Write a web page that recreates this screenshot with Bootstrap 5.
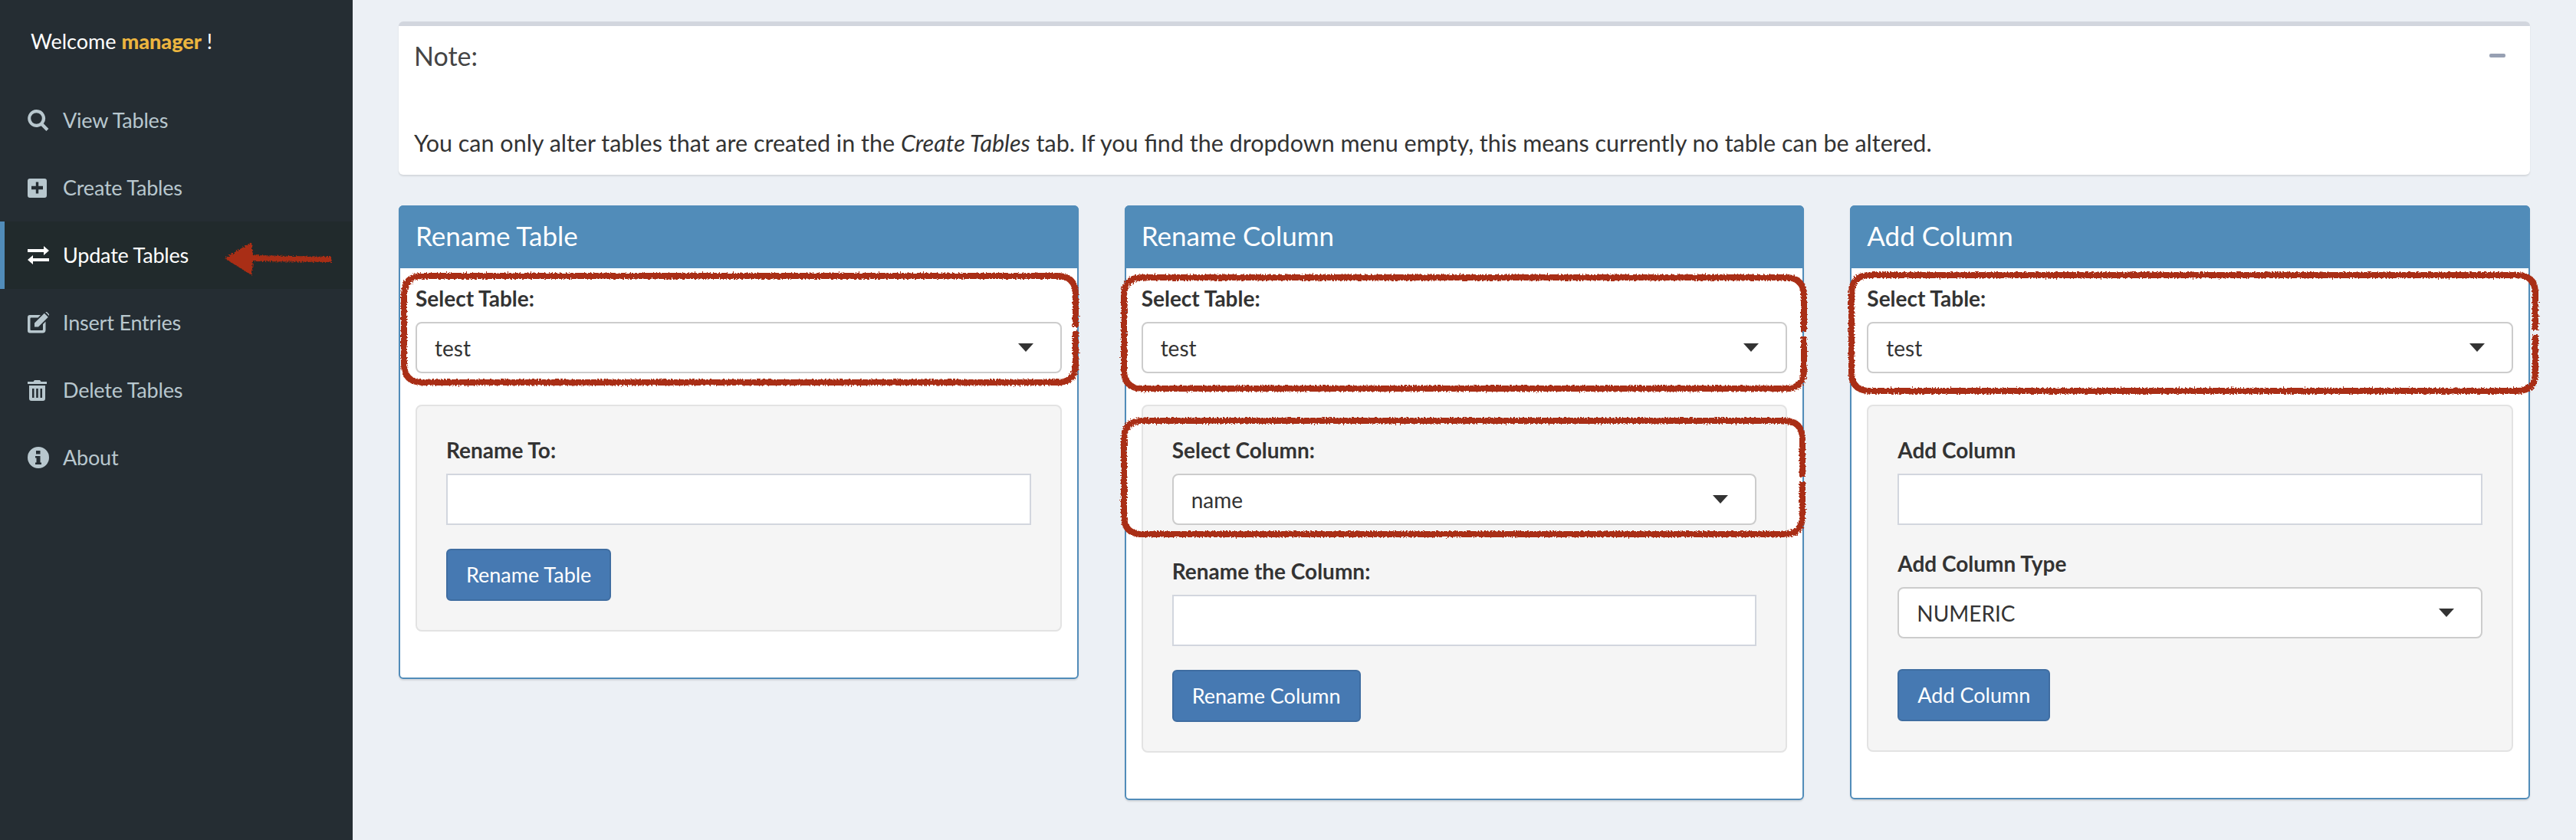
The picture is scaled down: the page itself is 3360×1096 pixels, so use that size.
<!DOCTYPE html>
<html lang="en">

<head>
  <meta charset="UTF-8" />
  <title>Update Tables</title>
  <link href="https://cdn.jsdelivr.net/npm/bootstrap@5.3.3/dist/css/bootstrap.min.css" rel="stylesheet">
  <style>
    body {
      background-color: #ecf0f5;
      color: #333;
      font-family: Lato, "Noto Sans", sans-serif;
      font-size: 28px;
      height: 1096px;
      overflow: hidden;
    }

    .side-panel {
      width: 460px;
      height: 1096px;
      flex: none;
      background-color: #252d33;
    }

    .welcome-line {
      color: #fff;
      padding: 40px 0 0 40px;
      height: 113px;
      line-height: 28px;
      font-size: 27px;
    }

    .welcome-line b {
      color: #edb53f;
      font-weight: 900;
    }

    .side-link {
      height: 88px;
      padding-left: 36px;
      color: #b8c7ce;
      border-left: 6px solid transparent;
      margin: 0;
      font-size: 27px;
      letter-spacing: -.2px;
    }

    .side-link svg {
      width: 28px;
      height: 28px;
      fill: currentColor;
      margin-left: -6px;
      margin-right: 18px;
      flex: none;
    }

    .side-link.on {
      color: #fff;
      background-color: #212a2c;
      border-left-color: #518cb9;
    }

    .page-main {
      padding: 28px 60px 0;
    }

    .note-box {
      background: #fff;
      border-top: 6px solid #d2d6de;
      border-radius: 6px;
      height: 200px;
      margin-bottom: 40px;
      box-shadow: 0 2px 2px rgba(0, 0, 0, .1);
    }

    .note-head {
      height: 76px;
      padding: 0 20px;
      font-size: 34px;
      color: #444;
    }

    .note-dash {
      width: 21px;
      height: 5px;
      border-radius: 2px;
      background: #97a0b3;
      margin-right: 12px;
    }

    .note-text {
      padding: 56px 20px 0;
      line-height: 40px;
      font-size: 30.5px;
    }

    .tools-row {
      --bs-gutter-x: 60px;
    }

    .tool-card {
      --bs-card-border-color: #518cb9;
      --bs-card-border-width: 2px;
      --bs-card-border-radius: 6px;
      --bs-card-inner-border-radius: 4px;
      box-shadow: 0 2px 2px rgba(0, 0, 0, .1);
    }

    .tool-card .card-header {
      height: 82px;
      margin: -2px -2px 0;
      padding: 0 22px 4px;
      background: #518cb9;
      border: 0;
      color: #fff;
      font-size: 35px;
      border-radius: 6px 6px 0 0;
    }

    .tool-card .card-body {
      padding: 20px 20px 60px;
    }

    .field-name {
      display: block;
      font-weight: 700;
      line-height: 40px;
      margin-top: -1px;
      margin-bottom: 11px;
    }

    .pick-box {
      display: block;
      width: 100%;
      height: 67px;
      font-size: 28px;
      color: #333;
      padding: 0 60px 0 23px;
      border: 2px solid #ccc;
      border-radius: 8px;
      background: #fff url("data:image/svg+xml,%3Csvg xmlns='http://www.w3.org/2000/svg' viewBox='0 0 20 11'%3E%3Cpath fill='%23333' d='M0 0h20L10 11z'/%3E%3C/svg%3E") no-repeat right 35px top 26px / 20px 11px;
      appearance: none;
    }

    .type-box {
      display: block;
      width: 100%;
      height: 67px;
      border: 2px solid #d2d6de;
      background: #fff;
      border-radius: 0;
    }

    .well-box {
      margin-top: 41px;
      background: #f5f5f5;
      border: 2px solid #e3e3e3;
      border-radius: 8px;
      padding: 38px;
    }

    .gap-long {
      margin-bottom: 41px;
    }

    .gap-mid {
      margin-bottom: 40px;
    }

    .gap-short {
      margin-bottom: 31px;
    }

    .go-btn {
      --bs-btn-bg: #4679b2;
      --bs-btn-border-color: #3f6da1;
      --bs-btn-color: #fff;
      --bs-btn-font-size: 27px;
      --bs-btn-padding-x: 24px;
      --bs-btn-padding-y: 0;
      --bs-btn-border-radius: 6px;
      --bs-btn-border-width: 2px;
      height: 68px;
      display: block;
    }

    .ink-layer {
      position: absolute;
      left: 0;
      top: 0;
      pointer-events: none;
    }
  </style>
</head>

<body>
  <div class="d-flex position-relative">
    <aside class="side-panel">
      <div class="welcome-line">Welcome <b>manager</b> !</div>
      <nav class="nav flex-column">
        <a class="nav-link side-link d-flex align-items-center" href="#">
          <svg viewBox="0 0 28 28"><path d="M11.5 0a11.5 11.5 0 0 1 9.3 18.3l6.6 6.6-3 3-6.7-6.6A11.5 11.5 0 1 1 11.5 0zm0 4.2a7.3 7.3 0 1 0 0 14.6 7.3 7.3 0 0 0 0-14.6z"/></svg>View Tables
        </a>
        <a class="nav-link side-link d-flex align-items-center" href="#">
          <svg viewBox="0 0 28 28"><path fill-rule="evenodd" d="M3 2h19a3 3 0 0 1 3 3v19a3 3 0 0 1-3 3H3a3 3 0 0 1-3-3V5a3 3 0 0 1 3-3zm7.8 4.5v5.300H5v4.400h5.800v5.300h3.400v-5.300H20v-4.400h-5.800V6.500z"/></svg>Create Tables
        </a>
        <a class="nav-link side-link on d-flex align-items-center" href="#">
          <svg viewBox="0 0 28 28"><path d="M21 2l7 6-7 6v-4H0V6h21zM7 14v4h21v4H7v4l-7-6z"/></svg>Update Tables
        </a>
        <a class="nav-link side-link d-flex align-items-center" href="#">
          <svg viewBox="0 0 28 28"><path d="M3 4h14l-3.500 3.500H4.500a1 1 0 0 0-1 1v14.500a1 1 0 0 0 1 1H19a1 1 0 0 0 1-1v-7l3.500-3.500v11a4 4 0 0 1-4 4H3a3 3 0 0 1-3-3V7a3 3 0 0 1 3-3z"/><path d="M9 14.500 21.800 1.700l5 5L14 19.500H9zM23.300.3a1.500 1.500 0 0 1 2 0l3 3a1.400 1.400 0 0 1 0 2z"/></svg>Insert Entries
        </a>
        <a class="nav-link side-link d-flex align-items-center" href="#">
          <svg viewBox="0 0 28 28"><path fill-rule="evenodd" d="M9 1h7l1.500 2H25v3H0V3h7.500zM2 8h21v17a3 3 0 0 1-3 3H5a3 3 0 0 1-3-3zm4 4v12h2.500V12zm5.200 0v12h2.600V12zm5.300 0v12H19V12z"/></svg>Delete Tables
        </a>
        <a class="nav-link side-link d-flex align-items-center" href="#">
          <svg viewBox="0 0 28 28"><path fill-rule="evenodd" d="M14 0a14 14 0 1 1 0 28 14 14 0 0 1 0-28zm-3 5v4.500h5.500V5zm-1 7v2.500h1.500v6H10V23h8v-2.500h-1.500V12z"/></svg>About
        </a>
      </nav>
    </aside>

    <main class="page-main flex-grow-1">
      <section class="note-box">
        <div class="note-head d-flex align-items-center justify-content-between">
          <span>Note:</span>
          <span class="note-dash"></span>
        </div>
        <p class="note-text m-0">You can only alter tables that are created in the <i>Create Tables</i> tab. If you find the dropdown menu empty, this means currently no table can be altered.</p>
      </section>

      <div class="row tools-row align-items-start">
        <div class="col-4">
          <div class="card tool-card">
            <div class="card-header d-flex align-items-center">Rename Table</div>
            <div class="card-body">
              <label class="field-name">Select Table:</label>
              <select class="pick-box"><option>test</option></select>
              <div class="well-box">
                <label class="field-name">Rename To:</label>
                <input class="type-box gap-short" type="text">
                <button class="btn go-btn" type="button">Rename Table</button>
              </div>
            </div>
          </div>
        </div>
        <div class="col-4">
          <div class="card tool-card">
            <div class="card-header d-flex align-items-center">Rename Column</div>
            <div class="card-body">
              <label class="field-name">Select Table:</label>
              <select class="pick-box"><option>test</option></select>
              <div class="well-box">
                <label class="field-name">Select Column:</label>
                <select class="pick-box gap-long"><option>name</option></select>
                <label class="field-name">Rename the Column:</label>
                <input class="type-box gap-short" type="text">
                <button class="btn go-btn" type="button">Rename Column</button>
              </div>
            </div>
          </div>
        </div>
        <div class="col-4">
          <div class="card tool-card">
            <div class="card-header d-flex align-items-center">Add Column</div>
            <div class="card-body">
              <label class="field-name">Select Table:</label>
              <select class="pick-box"><option>test</option></select>
              <div class="well-box">
                <label class="field-name">Add Column</label>
                <input class="type-box gap-short" type="text">
                <label class="field-name">Add Column Type</label>
                <select class="pick-box gap-mid"><option>NUMERIC</option></select>
                <button class="btn go-btn" type="button">Add Column</button>
              </div>
            </div>
          </div>
        </div>
      </div>
    </main>

    <!-- hand drawn marks on top of the page -->
    <svg class="ink-layer" width="3360" height="1096" viewBox="0 0 3360 1096">
      <defs>
        <filter id="rough" x="-5%" y="-5%" width="110%" height="110%">
          <feTurbulence type="fractalNoise" baseFrequency="0.5" numOctaves="2" seed="4" />
          <feDisplacementMap in="SourceGraphic" scale="6" />
        </filter>
      </defs>
      <g fill="none" stroke="#a92d13" stroke-width="8" filter="url(#rough)">
        <path d="M1403 432V475Q1403 499 1379 499H551Q527 499 527 475V384Q527 360 551 360H1379Q1403 360 1403 384V427" />
        <path d="M2353 439V483Q2353 507 2329 507H1490Q1466 507 1466 483V386Q1466 362 1490 362H2329Q2353 362 2353 386V433" />
        <path d="M2351 628V673Q2351 697 2327 697H1490Q1466 697 1466 673V573Q1466 549 1490 549H2327Q2351 549 2351 573V622" />
        <path d="M3307 437V486Q3307 510 3283 510H2439Q2415 510 2415 486V383Q2415 359 2439 359H3283Q3307 359 3307 383V431" />
      </g>
      <path fill="#a92d13" filter="url(#rough)" d="M293 337 328 316 330 333 432 335V342L330 341 328 359z" />
    </svg>
  </div>

  <script src="https://cdn.jsdelivr.net/npm/bootstrap@5.3.3/dist/js/bootstrap.bundle.min.js"></script>
</body>

</html>
